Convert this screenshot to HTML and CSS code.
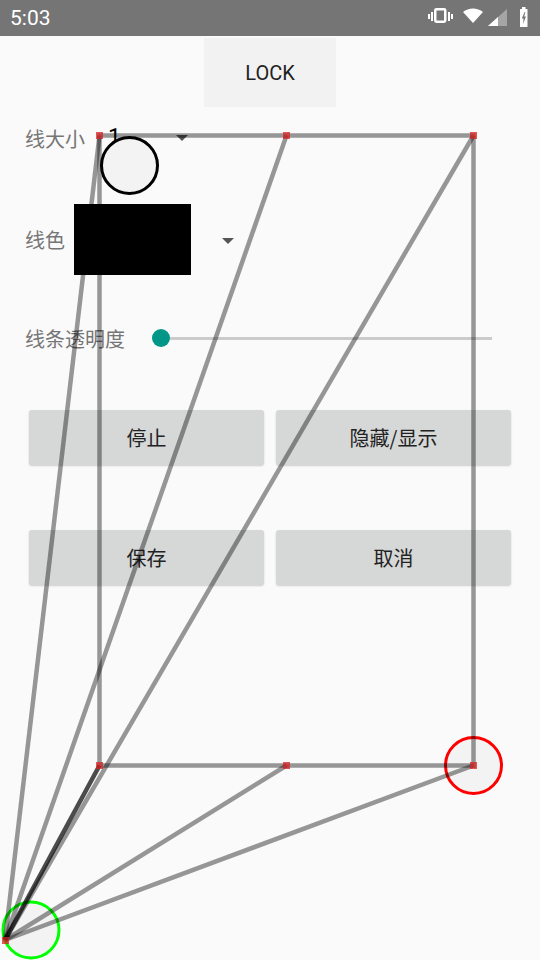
FILE: index.html
```html
<!DOCTYPE html>
<html lang="zh">
<head>
<meta charset="UTF-8">
<meta name="viewport" content="width=device-width, initial-scale=1.0">
<title>画线设置</title>
<link rel="stylesheet" href="styles.css">
</head>
<body>
<div class="status-bar">
  <span class="time">5:03</span>
  <svg class="status-icons" width="120" height="28" viewBox="0 0 120 28">
    <!-- vibrate -->
    <rect x="8" y="10" width="2" height="5" fill="#fff"/>
    <rect x="11" y="8" width="2" height="9" fill="#fff"/>
    <rect x="15.25" y="5.25" width="10" height="12.5" rx="1.2" fill="none" stroke="#fff" stroke-width="2.5"/>
    <rect x="28" y="8" width="2" height="9" fill="#fff"/>
    <rect x="31" y="10" width="2" height="5" fill="#fff"/>
    <!-- wifi -->
    <path d="M43 8 A16 16 0 0 1 63 8 L53 19 Z" fill="#fff"/>
    <!-- signal -->
    <polygon points="68,22 87,22 87,5" fill="rgba(255,255,255,0.35)"/>
    <polygon points="68,22 78,22 78,13" fill="#fff"/>
    <!-- battery -->
    <rect x="102" y="3" width="3.5" height="2.5" fill="#fff"/>
    <rect x="100" y="5" width="7.5" height="18" rx="0.6" fill="#fff"/>
    <polygon points="104.6,8 101.8,14.6 103.6,14.6 103,20 106,12.6 104.2,12.6 105.4,8" fill="#757575"/>
  </svg>
</div>

<div class="top-bar">
  <button class="lock-btn">LOCK</button>
</div>

<div class="row size-row">
  <span class="label">线大小</span>
  <span class="spinner-value">1</span>
  <span class="arrow size-arrow"></span>
</div>

<div class="row color-row">
  <span class="label">线色</span>
  <span class="color-box"></span>
  <span class="arrow color-arrow"></span>
</div>

<div class="row alpha-row">
  <span class="label">线条透明度</span>
  <div class="slider">
    <span class="thumb"></span>
    <span class="track"></span>
  </div>
</div>

<div class="btn-row">
  <button class="btn">停止</button>
  <button class="btn">隐藏/显示</button>
</div>
<div class="btn-row second">
  <button class="btn">保存</button>
  <button class="btn">取消</button>
</div>

<svg class="drawing" width="540" height="960" viewBox="0 0 540 960">
  <circle cx="129.5" cy="165.5" r="28" fill="#f3f3f3" stroke="#000" stroke-width="3"/>
  <circle cx="473.5" cy="765.5" r="28" fill="#f3f3f3" stroke="#f00" stroke-width="3"/>
  <circle cx="31" cy="930" r="28" fill="#f3f3f3" stroke="#0f0" stroke-width="3"/>
  <g fill="none" stroke="rgba(0,0,0,0.4)" stroke-width="4.5">
    <path d="M99.5 135.5 H473.5 V765.5 H99.5 Z"/>
    <line x1="5" y1="940" x2="99.5" y2="135.5"/>
    <line x1="5" y1="940" x2="286.5" y2="135.5"/>
    <line x1="5" y1="940" x2="473.5" y2="135.5"/>
    <line x1="5" y1="940" x2="286.5" y2="765.5"/>
    <line x1="5" y1="940" x2="473.5" y2="765.5"/>
  </g>
  <line x1="5" y1="940" x2="99.5" y2="765.5" stroke="rgba(0,0,0,0.7)" stroke-width="4.5"/>
  <g fill="rgba(215,35,35,0.75)">
    <rect x="96" y="132" width="7" height="7"/>
    <rect x="283" y="132" width="7" height="7"/>
    <rect x="470" y="132" width="7" height="7"/>
    <rect x="96" y="762" width="7" height="7"/>
    <rect x="283" y="762" width="7" height="7"/>
    <rect x="470" y="762" width="7" height="7"/>
    <rect x="2" y="937" width="7" height="7"/>
  </g>
</svg>
</body>
</html>
```

FILE: styles.css
```css
body {
  margin: 0;
  padding: 0;
  width: 540px;
  height: 960px;
  position: relative;
  overflow: hidden;
  background-color: #fafafa;
  font-family: "Noto Sans CJK SC", "Noto Sans", sans-serif;
}

.status-bar {
  height: 36px;
  background-color: #757575;
  display: flex;
  justify-content: space-between;
  align-items: center;
  padding-left: 10px;
}

.time {
  font-family: Roboto, sans-serif;
  font-size: 21px;
  color: #fff;
}

.status-icons {
  display: block;
}

.top-bar {
  display: flex;
  justify-content: center;
  padding-top: 2px;
}

.lock-btn {
  width: 132px;
  height: 69px;
  border: none;
  background-color: #f2f2f2;
  font-family: Roboto, sans-serif;
  font-weight: 400;
  font-size: 20px;
  color: #222;
  padding: 0;
}

.row {
  display: flex;
  align-items: center;
  padding-left: 25px;
}

.label {
  font-size: 20px;
  color: #757575;
}

.size-row {
  margin-top: 11px;
  height: 40px;
}

.spinner-value {
  font-family: Roboto, sans-serif;
  font-size: 23px;
  color: #000;
  margin-left: 23px;
  margin-top: -1px;
}

.arrow {
  width: 0;
  height: 0;
  border-left: 6px solid transparent;
  border-right: 6px solid transparent;
  border-top: 6px solid #555;
}

.size-arrow {
  margin-left: 55px;
  margin-top: -1px;
}

.color-row {
  margin-top: 46px;
  height: 71px;
}

.label + .color-box {
  margin-left: 9px;
}

.color-box {
  width: 117px;
  height: 71px;
  background-color: #000;
}

.color-arrow {
  margin-left: 31px;
  margin-top: 2px;
}

.alpha-row {
  margin-top: 48px;
  height: 30px;
}

.slider {
  display: flex;
  align-items: center;
  width: 340px;
  margin-left: 27px;
}

.thumb {
  width: 18px;
  height: 18px;
  border-radius: 50%;
  background-color: #009688;
  flex-shrink: 0;
}

.track {
  flex: 1;
  height: 3px;
  background-color: #cbcbcb;
}

.btn-row {
  display: flex;
  gap: 12px;
  padding: 0 29px;
  margin-top: 57px;
}

.btn-row.second {
  margin-top: 65px;
}

.btn {
  flex: 1;
  height: 55px;
  border: none;
  border-radius: 3px;
  background-color: #d6d7d7;
  box-shadow: 0 1px 2px rgba(0, 0, 0, 0.18);
  font-family: "Noto Sans CJK SC", sans-serif;
  font-size: 20px;
  color: #222;
  padding: 0;
}

.drawing {
  position: absolute;
  top: 0;
  left: 0;
  pointer-events: none;
}
```
